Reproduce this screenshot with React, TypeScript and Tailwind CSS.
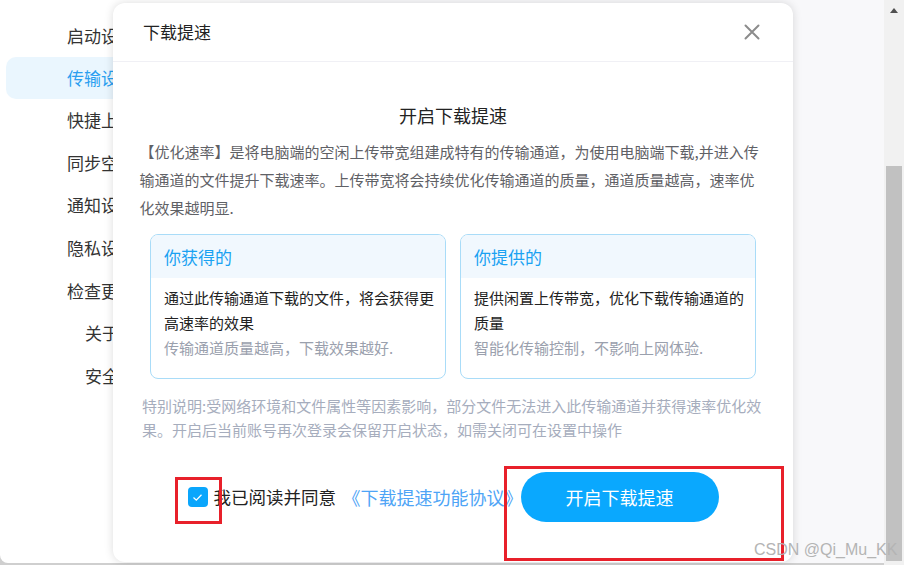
import React from "react";

const menu = [
  { label: "启动设置", sub: false, active: false },
  { label: "传输设置", sub: false, active: true },
  { label: "快捷上传", sub: false, active: false },
  { label: "同步空间", sub: false, active: false },
  { label: "通知设置", sub: false, active: false },
  { label: "隐私设置", sub: false, active: false },
  { label: "检查更新", sub: false, active: false },
  { label: "关于", sub: true, active: false },
  { label: "安全", sub: true, active: false },
];

const cards = [
  {
    title: "你获得的",
    body: "通过此传输通道下载的文件，将会获得更高速率的效果",
    hint: "传输通道质量越高，下载效果越好.",
  },
  {
    title: "你提供的",
    body: "提供闲置上传带宽，优化下载传输通道的质量",
    hint: "智能化传输控制，不影响上网体验.",
  },
];

function Card({ title, body, hint }: { title: string; body: string; hint: string }) {
  return (
    <div className="h-[145px] w-[296px] overflow-hidden rounded-[8px] border border-[#a9dcf8]">
      <div className="flex h-[43px] items-center bg-[#f1f8fe] pl-[13px] text-[17px] text-[#1aa2f2]">
        {title}
      </div>
      <div className="pl-[13px] pr-[8px] pt-[7px] text-[15px] leading-[25px]">
        <p className="text-[#222]">{body}</p>
        <p className="text-[#9aa0ad]">{hint}</p>
      </div>
    </div>
  );
}

export default function App() {
  return (
    <div
      className="relative flex h-[565px] w-[904px] overflow-hidden bg-[#cfcfcf]"
      style={{ fontFamily: '"Noto Sans CJK SC", "Noto Sans", sans-serif' }}
    >
      {/* page behind the dialog */}
      <div className="flex h-[563px] flex-1 overflow-hidden rounded-bl-[8px] bg-white">
        <nav className="flex w-[240px] flex-col pt-[14px]">
          {menu.map((m) => (
            <div
              key={m.label}
              className={
                m.active
                  ? "ml-[6px] flex h-[42px] shrink-0 items-center rounded-[10px] bg-[#eaf6fe] pl-[61px] text-[17px] text-[#2a9ff0]"
                  : m.sub
                    ? "flex h-[42.6px] shrink-0 items-center pl-[85px] text-[17px] text-[#333]"
                    : "flex h-[42.6px] shrink-0 items-center pl-[67px] text-[17px] text-[#333]"
              }
            >
              {m.label}
            </div>
          ))}
        </nav>
        <div className="flex-1 bg-[#f8f8fa]" />
      </div>

      {/* scrollbar */}
      <div className="flex h-[565px] w-[20px] flex-col items-center bg-[#f1f1f1]">
        <div className="flex h-[20px] items-center justify-center">
          <div className="h-0 w-0 border-x-[4px] border-b-[5px] border-x-transparent border-b-[#505050]" />
        </div>
        <div className="mt-[146px] h-[395px] w-[16px] bg-[#c1c1c1]" />
      </div>

      {/* dialog */}
      <div className="absolute left-[113px] top-[3px] flex h-[559px] w-[680px] flex-col rounded-[12px] bg-white shadow-[0_0_10px_rgba(0,0,0,0.14)]">
        <div className="flex h-[59px] shrink-0 items-center justify-between border-b border-[#f0f0f5] pl-[30px] pr-[33px]">
          <span className="text-[17px] text-[#222]">下载提速</span>
          <svg width="16" height="16" viewBox="0 0 16 16" fill="none">
            <path d="M1.5 1.5L14.5 14.5M14.5 1.5L1.5 14.5" stroke="#8c8c8c" strokeWidth="2" strokeLinecap="round" />
          </svg>
        </div>

        <div className="flex flex-col items-center pt-[40px]">
          <h2 className="text-[18px] leading-[26px] text-[#222]">开启下载提速</h2>
          <p className="mt-[10px] w-[627px] text-[15px] leading-[28px] text-[#5f6166]">
            【优化速率】是将电脑端的空闲上传带宽组建成特有的传输通道，为使用电脑端下载,并进入传输通道的文件提升下载速率。上传带宽将会持续优化传输通道的质量，通道质量越高，速率优化效果越明显.
          </p>

          <div className="mt-[12px] flex gap-[14px]">
            {cards.map((c) => (
              <Card key={c.title} {...c} />
            ))}
          </div>

          <p className="mt-[15px] w-[622px] text-[15px] leading-[24px] text-[#a6adbd]">
            特别说明:受网络环境和文件属性等因素影响，部分文件无法进入此传输通道并获得速率优化效果。开启后当前账号再次登录会保留开启状态，如需关闭可在设置中操作
          </p>

          <div className="mt-[30px] flex items-center">
            <div className="flex h-[20px] w-[20px] items-center justify-center rounded-[4px] bg-[#0aa6fc]">
              <svg width="11" height="9" viewBox="0 0 11 9" fill="none">
                <path d="M1.5 4.5L4.3 7.2L9.5 1.8" stroke="white" strokeWidth="1.3" />
              </svg>
            </div>
            <span className="ml-[6px] w-[123px] whitespace-nowrap text-[17.5px] text-[#222]">我已阅读并同意</span>
            <span className="ml-[6px] w-[178px] whitespace-nowrap text-[18px] text-[#4ea4f6]">《下载提速功能协议》</span>
            <button className="flex h-[50px] w-[198px] items-center justify-center rounded-full bg-[#0aa8fe] text-[18px] text-white">
              开启下载提速
            </button>
          </div>
        </div>
      </div>

      {/* annotation boxes */}
      <div className="absolute left-[175px] top-[477px] h-[47px] w-[47px] border-[3px] border-[#e8202a]" />
      <div className="absolute left-[504px] top-[466px] h-[95px] w-[280px] border-[3px] border-[#e8202a]" />

      <div
        className="absolute left-[754px] top-[538px] text-[16px] text-[#b4b4b4]"
        style={{ fontFamily: '"Liberation Sans", Arial, sans-serif' }}
      >
        CSDN @Qi_Mu_KK
      </div>
    </div>
  );
}
